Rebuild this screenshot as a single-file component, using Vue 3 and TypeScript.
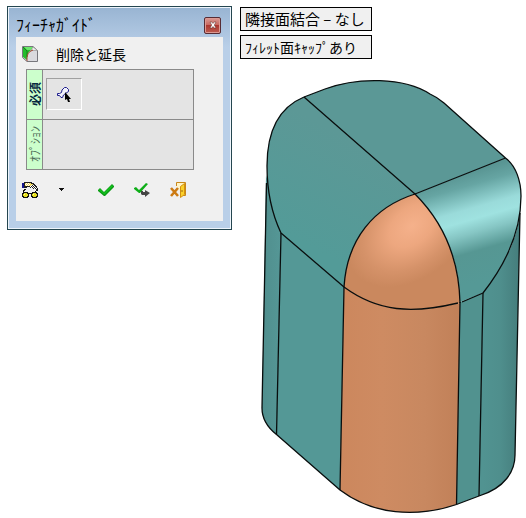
<script setup lang="ts">
import { ref } from 'vue'

const title = 'ﾌｨｰﾁｬｶﾞｲﾄﾞ'
const command = '削除と延長'
const hints = [
  { text: '隣接面結合 – なし', size: 'large' },
  { text: 'ﾌｨﾚｯﾄ面ｷｬｯﾌﾟあり', size: 'small' },
]
const selecting = ref(true)
</script>

<template>
  <main class="viewport">
    <section class="dialog" aria-labelledby="dialog-title">
      <header class="titlebar">
        <h1 id="dialog-title">{{ title }}</h1>
        <button class="close" type="button" aria-label="閉じる">
          <svg viewBox="0 0 8 8" width="8" height="8">
            <path d="M1 1h2l1 1.5L5 1h2L5.3 4 7 7H5L4 5.5 3 7H1L2.7 4z" fill="#fff" stroke="#5d2c2b" stroke-width=".5" />
          </svg>
        </button>
      </header>
      <div class="content">
        <div class="command">
          <svg viewBox="0 0 18 18" width="18" height="18" aria-hidden="true">
            <path d="M1.500 1.500H12L16.500 5.500V16.500H6L1.500 12.500z" fill="#dadade" stroke="#77777c" />
            <path d="M2 2h10l-3 4q-3 2-3 9l-4-3z" fill="#23bd2b" />
            <path d="M3 2h9l-2 3H6z" fill="#6ce86c" />
            <path d="M2 2l4 4v6" fill="none" stroke="#187a1d" />
            <path d="M12 2l4.500 3.500H10z" fill="#ececec" stroke="#8b8b8b" stroke-width=".6" />
            <path d="M6 16Q5 7 12 5" fill="none" stroke="#a84a35" />
          </svg>
          <h2>{{ command }}</h2>
        </div>
        <div class="steps">
          <div class="step">
            <div class="tab required"><span>必須</span></div>
            <div class="field">
              <button class="pick" type="button" aria-label="面の選択" :aria-pressed="selecting" @click="selecting = !selecting">
                <svg viewBox="0 0 16 16" width="16" height="16">
                  <path d="M1.500 7.500V9.500H3.500L5 11.500H6.500L7.500 9L9.500 7.500L12.500 5.500V3.500L10.500 1.500H8.500L6 4L5.500 6.500L3.500 7.500z" fill="#f2f2fb" stroke="#1c1c8c" />
                  <path d="M9 6v8l2-1 1 3h2l-1-3h2z" fill="#000" />
                </svg>
              </button>
            </div>
          </div>
          <div class="step">
            <div class="tab"><span>ｵﾌﾟｼｮﾝ</span></div>
            <div class="field"></div>
          </div>
        </div>
        <div class="toolbar">
          <button type="button" aria-label="プレビュー">
            <svg viewBox="0 0 16 16" width="16" height="16" shape-rendering="crispEdges">
              <path d="M2 0h8v1h2v1h1v1h1v1h1v2h1v3h-2V8h-1V7h-2V6H8V5H5v1H2z" fill="#222" />
              <path d="M3 1h6v1h2v1H9v2H8V4H3z" fill="#f3d75b" />
              <path d="M4 1h1v1H4zM6 1h1v1H6zM3 2h1v1H3zM5 2h1v1H5zM7 2h1v1H7zM4 3h1v1H4zM6 3h1v1H6zM9 3h1v1H9zM11 3h1v1h-1zM8 4h1v1H8zM10 4h1v1h-1zM12 4h1v1h-1zM9 5h1v1H9zM11 5h1v1h-1zM13 5h1v1h-1zM12 6h1v1h-1zM14 6h1v1h-1zM13 7h1v1h-1z" fill="#fff" />
              <path d="M0 1h2v5H0z" fill="#15158e" />
              <path d="M2 7h2v1H3v1H2v1H1V8h1zM13 9h1v1h-1z" fill="#111" />
              <path d="M1 10h5v1h4v-1h5v1h1v4h-1v1h-5v-1H9v-3H7v3H6v1H1v-1H0v-4h1z" fill="#111" />
              <path d="M2 11h3v1h1v2H5v1H2v-1H1v-2h1zM11 11h3v1h1v2h-1v1h-3v-1h-1v-2h1z" fill="#e5df20" />
              <path d="M2 12h1v1H2zM11 12h1v1h-1z" fill="#fff99c" />
            </svg>
          </button>
          <button type="button" aria-label="プレビューのオプション">
            <svg viewBox="0 0 16 16" width="16" height="16" shape-rendering="crispEdges">
              <path d="M5 6h5v1H9v1H8v1H7V8H6V7H5z" fill="#111" />
            </svg>
          </button>
          <button class="apart" type="button" aria-label="OK">
            <svg viewBox="0 0 16 16" width="16" height="16">
              <path d="M0 8l2-2 4 4 8-8 2 2v1l-9 9H6L0 9z" fill="#0c9a15" />
              <path d="M1 8l1-1 4 4 8-8 1 1-8.500 8.500z" fill="#13c51e" />
            </svg>
          </button>
          <button type="button" aria-label="適用">
            <svg viewBox="0 0 16 16" width="16" height="16">
              <path d="M0 6l2-1 3 3 7-7 2 1-8 9H5L0 7z" fill="#0eae18" />
              <path d="M7 9v3l1 1h3v2l5-4-5-3v2H9V9z" fill="#454545" />
            </svg>
          </button>
          <button type="button" aria-label="キャンセル">
            <svg viewBox="0 0 16 16" width="16" height="16">
              <path d="M6.500 4V.5h9v13H13" fill="#fff3c5" stroke="#c98718" />
              <path d="M10.500 4.500l4-3v11l-4 3z" fill="#fbd12b" stroke="#d39110" />
              <path d="M12 8v2" stroke="#9c6914" />
              <path d="M1 6l7 8M8 6l-7 8" fill="none" stroke="#cc7b14" stroke-width="2.600" />
            </svg>
          </button>
        </div>
      </div>
    </section>

    <section class="scene">
      <ul class="hints">
        <li v-for="hint in hints" :key="hint.text" :class="hint.size">{{ hint.text }}</li>
      </ul>
      <svg class="model" viewBox="260 78 262 437" role="img" aria-label="フィレット付きソリッド">
        <defs>
          <linearGradient id="wall" gradientUnits="userSpaceOnUse" x1="483" y1="0" x2="520" y2="0">
            <stop offset="0" stop-color="#519391" />
            <stop offset=".45" stop-color="#4f8f8d" />
            <stop offset="1" stop-color="#457d7c" />
          </linearGradient>
          <linearGradient id="leftwall" gradientUnits="userSpaceOnUse" x1="262" y1="0" x2="281" y2="0">
            <stop offset="0" stop-color="#508e8d" />
            <stop offset="1" stop-color="#559796" />
          </linearGradient>
          <linearGradient id="fillet" gradientUnits="userSpaceOnUse" x1="455" y1="176" x2="485" y2="280">
            <stop offset="0" stop-color="#599593" />
            <stop offset=".12" stop-color="#66a5a3" />
            <stop offset=".33" stop-color="#9adbda" />
            <stop offset=".43" stop-color="#9fe2e0" />
            <stop offset=".55" stop-color="#86c6c4" />
            <stop offset=".72" stop-color="#569793" />
            <stop offset="1" stop-color="#559996" />
          </linearGradient>
          <linearGradient id="leftfillet" gradientUnits="userSpaceOnUse" x1="361" y1="145" x2="306" y2="245">
            <stop offset="0" stop-color="#5c9896" />
            <stop offset="1" stop-color="#539b98" />
          </linearGradient>
          <radialGradient id="ball" gradientUnits="userSpaceOnUse" cx="0" cy="0" r="1" gradientTransform="translate(412 226) rotate(-40) scale(74 50)">
            <stop offset="0" stop-color="#f5b18b" />
            <stop offset=".35" stop-color="#eda77f" />
            <stop offset=".75" stop-color="#d59269" />
            <stop offset="1" stop-color="#ca885e" />
          </radialGradient>
          <linearGradient id="column" gradientUnits="userSpaceOnUse" x1="340" y1="0" x2="460" y2="0">
            <stop offset="0" stop-color="#cc875d" />
            <stop offset=".35" stop-color="#ce8b62" />
            <stop offset=".7" stop-color="#c88860" />
            <stop offset="1" stop-color="#c18058" />
          </linearGradient>
        </defs>
        <path fill="url(#leftwall)" d="M266 175L262 408C262 419 267 427 276.500 434.500L281 233z" />
        <path fill="#549896" d="M281 233L276.500 434.500L340 490L344 287z" />
        <path fill="url(#wall)" d="M520 210C518 239 504 266 483 293L479 496C505 488 515 471 515 455z" />
        <path fill="#51928f" d="M460 302L483 293L479 496L456.500 504.500z" />
        <path fill="#5b9896" d="M304 97L325 89C357 77 404 77 430 94Q437 97 444 103L505.500 158L415 194z" />
        <path fill="url(#leftfillet)" d="M304 97C275 109 267 138 267 166C267 190 272 214 281 233L344 287C347 239 374 207 415 194z" />
        <path fill="url(#fillet)" d="M415 194L505.500 158C516 166 521 181 521 196C521 233 505 265 483 293L460 302C459 257 443 222 415 194z" />
        <path fill="url(#ball)" d="M415 194C374 207 347 239 344 287C378 312 412 314 460 303C459 257 443 222 415 194z" />
        <path fill="url(#column)" d="M344 287C378 312 412 314 460 303L456.500 504.500C416 518 373 515 340 490z" />
        <g class="edges">
          <path d="M304 97L325 89C357 77 404 77 430 94Q437 97 444 103L505.500 158C516 166 521 181 521 196C521 233 505 265 483 293" />
          <path d="M304 97C275 109 267 138 267 166C267 190 272 214 281 233L344 287" />
          <path d="M304 97L415 194L505.500 158" />
          <path d="M344 287C347 239 374 207 415 194C443 222 459 257 460 303" />
          <path d="M344 287C378 312 412 314 458 303M462 302L483 293" />
          <path d="M266.500 183L262 408C262 419 267 427 276.500 434.500L340 490C373 515 416 518 456.500 504.500L479 496C505 488 515 471 515 455L520 213" />
          <path d="M281 233L276.500 434.500M344 287L340 490M460 302L456.500 504.500M483 293L479 496" />
        </g>
      </svg>
    </section>
  </main>
</template>

<style>
body {
  margin: 0;
  background: #fff;
}
</style>

<style scoped>
.viewport {
  display: flex;
  align-items: flex-start;
  gap: 8px;
  padding: 6px 4px 3px 7px;
  font-family: "Noto Sans CJK JP", sans-serif;
  color: #000;
}

.dialog {
  box-sizing: border-box;
  flex: 0 0 225px;
  padding: 0 8px 8px;
  border: 1px solid #254650;
  background: linear-gradient(#98b4d2, #b9cfe8 40px);
  box-shadow: inset 0 0 0 1px #eef5fc;
}

.titlebar {
  display: flex;
  align-items: center;
  justify-content: space-between;
  height: 30px;
  padding: 0 2px 0 0;
}

h1,
h2 {
  margin: 0;
  font-weight: 400;
}

h1 {
  padding-top: 4px;
  font-size: 16px;
  line-height: 24px;
}

h2 {
  font-size: 14px;
  line-height: 20px;
}

button {
  display: grid;
  place-items: center;
  padding: 0;
  border: 0;
  background: none;
}

.close {
  width: 17px;
  height: 17px;
  margin-top: 6px;
  border: 1px solid #572c34;
  border-radius: 2px;
  background: linear-gradient(#d99a94, #c96961 45%, #ac3730 50%, #bd5c50);
  box-shadow: inset 0 0 0 1px #dc9992;
}

.content {
  display: flow-root;
  padding: 0 6px 23px;
  background: #f0f0f0;
}

.command {
  display: flex;
  align-items: center;
  gap: 17px;
  padding: 7px 0 3px;
}

.command svg {
  margin-left: -1px;
}

.steps {
  width: 168px;
  box-sizing: border-box;
  margin: 2px 0 0 4px;
  border: 1px solid #8a8a8a;
}

.step {
  display: flex;
  height: 49px;
}

.step + .step {
  border-top: 1px solid #8a8a8a;
}

.tab {
  display: grid;
  place-items: center;
  width: 15px;
  border-right: 1px solid #8a8a8a;
  background: #ccffcc;
  color: #4c6b58;
  font-size: 12px;
  line-height: 14px;
}

.tab span {
  writing-mode: vertical-rl;
  text-orientation: sideways;
  transform: rotate(180deg);
}

.required {
  color: #06283f;
  font-weight: 700;
}

.field {
  flex: 1;
  padding: 8px 3px;
  background: #e4e4e4;
}

.pick {
  width: 36px;
  height: 32px;
  border: 1px solid;
  border-color: #a0a0a0 #fff #fff #a0a0a0;
}

.toolbar {
  display: flex;
  gap: 20px;
  padding-top: 12px;
}

.toolbar button {
  width: 16px;
  height: 16px;
}

.toolbar button:nth-child(2) {
  margin-left: -4px;
}

.toolbar .apart {
  margin-left: 8px;
}

.scene {
  flex: 1;
  min-width: 0;
}

.hints {
  display: flex;
  flex-direction: column;
  align-items: flex-start;
  gap: 4px;
  margin: 1px 0 19px;
  padding: 0;
  list-style: none;
}

.hints li {
  box-sizing: border-box;
  height: 24px;
  padding: 0 6px 0 4px;
  border: 1px solid #000;
  background: #f0f0f0;
  line-height: 22px;
  white-space: nowrap;
}

.hints .large {
  font-size: 15px;
}

.hints .small {
  padding-right: 14px;
  font-size: 14px;
}

.model {
  display: block;
  box-sizing: border-box;
  width: 100%;
  padding-left: 20px;
}

.edges {
  fill: none;
  stroke: #080d0d;
  stroke-width: 1.300;
  stroke-linejoin: round;
}
</style>
